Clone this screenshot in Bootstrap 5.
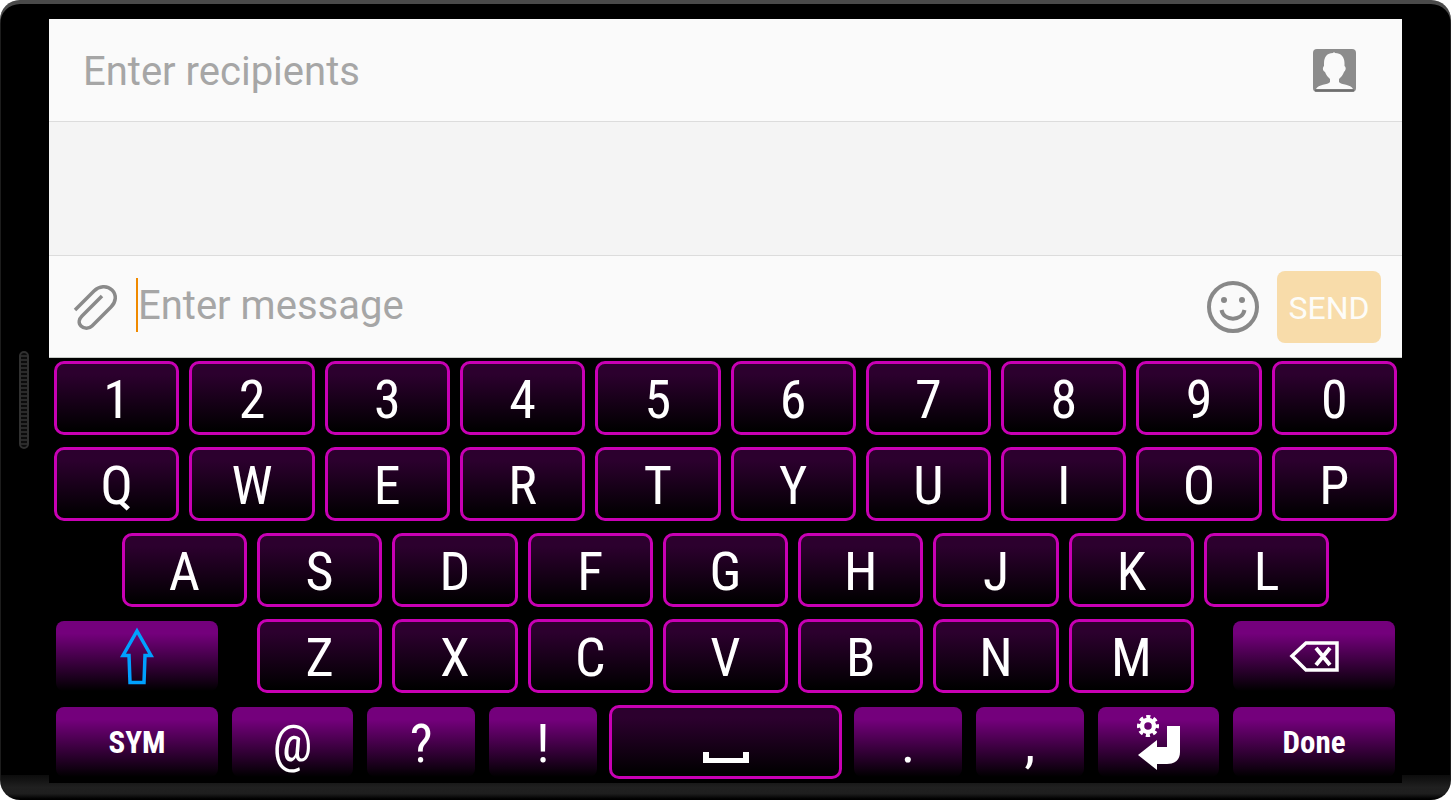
<!DOCTYPE html>
<html lang="en">
<head>
<meta charset="utf-8">
<meta name="viewport" content="width=device-width, initial-scale=1">
<title>New message</title>
<link rel="stylesheet" href="https://cdn.jsdelivr.net/npm/bootstrap@5.3.0/dist/css/bootstrap.min.css">
<style>
  body { font-family: Roboto, "Liberation Sans", sans-serif; background: #fff; }

  /* Phone body */
  .device {
    min-height: 100vh;
    border-radius: 20px;
    overflow: hidden;
    background:
      linear-gradient(#0c0c0c, #202020 50%, #1e1e1e 75%, #000 96%) bottom / 100% 25px no-repeat,
      #000;
    box-shadow: inset 0 4px 0 #4a4a4a, inset 1px 0 0 #1c1c1c, inset -1px 0 0 #1c1c1c;
  }
  .bezel { flex: 0 0 49px; }
  .speaker {
    width: 10px;
    height: 98px;
    margin-right: 1px;
    border: 2px solid #303030;
    border-radius: 5px;
    background: repeating-linear-gradient(#0c0c0c 0 2px, #2a2a2a 2px 4px);
  }
  .phone-screen { padding: 19px 0 17px; min-width: 0; }

  /* Message composer */
  .composer { background: #fafafa; border-bottom: 1px solid #c8ccc8; }
  .recipients { min-height: 103px; padding: 0 46px 0 34px; border-bottom: 1px solid #dcdcdc; }
  .thread { background: #f4f4f4; min-height: 60px; }
  .compose-row { min-height: 102px; padding: 0 21px 4px 23px; border-top: 1px solid #dcdcdc; }
  .field,
  .field:focus {
    min-width: 0;
    height: 54px;
    padding: 2px 0 0;
    border: 0;
    border-radius: 0;
    background: transparent;
    box-shadow: none;
    color: #444;
    font-size: 40px;
    line-height: 52px;
  }
  .field::placeholder { color: #a6a6a6; opacity: 1; }
  .field-active, .field-active:focus { border-left: 2px solid #f08a00; }
  .compose-row .icon-button { padding-top: 4px; }
  .icon-button { padding: 0; border: 0; line-height: 0; color: #8a8a8a; }
  .send-button,
  .send-button:disabled {
    width: 104px;
    height: 72px;
    margin-top: 4px;
    padding: 2px 0 0;
    border: 0;
    border-radius: 8px;
    background: #f8dcaa;
    color: #fdfcf8;
    font-size: 32px;
    opacity: 1;
  }

  /* Keyboard */
  .keyboard { background: #000; padding: 3px 0 4px; gap: 12px; }
  .cell { padding: 0 5px; flex: 0 0 10%; min-width: 0; }
  .cell-9 { flex-basis: 9%; }
  .cell-13 { flex-basis: 13%; }
  .cell-18 { flex-basis: 18%; }
  .gap-cell { flex: 0 0 2%; }
  .keycap,
  .keycap:hover,
  .keycap:active {
    height: 74px;
    padding: 4px 0 0;
    border: 3px solid #c800b4;
    border-radius: 10px;
    background: linear-gradient(#2c002e 15%, #000 98%) padding-box;
    color: #fff;
    font-family: "Roboto Condensed", Roboto, "Liberation Sans", sans-serif;
    font-size: 54px;
    line-height: 64px;
    overflow: hidden;
  }
  .keycap.fn,
  .keycap.fn:hover,
  .keycap.fn:active {
    border: 2px solid transparent;
    background: linear-gradient(#74007c 18%, #000 100%) padding-box;
  }
  .keycap.word { font-size: 31px; font-weight: 700; padding: 2px 0 0; }
  .keycap.at-sign { font-size: 52px; padding-top: 4px; }
  .keycap svg { display: block; margin: 0 auto; }
  .keycap.pictured { padding: 0; }
</style>
</head>
<body>
<div class="device d-flex">
  <div class="bezel d-flex align-items-center justify-content-center"><div class="speaker"></div></div>

  <main class="phone-screen flex-grow-1 d-flex flex-column">
    <form class="composer flex-grow-1 d-flex flex-column">
      <div class="recipients d-flex align-items-center">
        <input type="text" class="form-control field flex-grow-1" placeholder="Enter recipients" aria-label="Enter recipients">
        <button type="button" class="btn icon-button" aria-label="Contacts">
          <svg width="43" height="43" viewBox="0 0 43 43">
            <rect width="43" height="43" rx="4" fill="#8c8c8c"/>
            <path fill="#fafafa" d="M20 4L21 3L22 4C28 4 31.500 8 31.500 14V17C34 19 32 22 31 23C30 26 28 28 26 30V33C28 36 38 35 40 40H3C5 35 15 36 17 33V30C15 28 13 26 12 23C10 22 9 19 11 17V14C11 8 14 4 20 4Z"/>
            <path d="M2 41.500H41" stroke="#6e6e6e" stroke-width="2"/>
          </svg>
        </button>
      </div>

      <div class="thread flex-grow-1"></div>

      <div class="compose-row d-flex align-items-center">
        <button type="button" class="btn icon-button me-3" aria-label="Attach">
          <svg width="48" height="48" viewBox="0 0 48 48" fill="none" stroke="#8a8a8a" stroke-width="3.500">
            <path d="M3 27L22 8C27 3 35 2 40 7C45 12 44 19 39 24L20 43C17 46 12 46 9 43C6 40 7 36 10 33L30 13"/>
          </svg>
        </button>
        <input type="text" class="form-control field field-active flex-grow-1" placeholder="Enter message" aria-label="Enter message">
        <button type="button" class="btn icon-button me-3" aria-label="Emoji">
          <svg width="54" height="54" viewBox="0 0 54 54">
            <circle cx="26" cy="27" r="24" fill="none" stroke="#888" stroke-width="4"/>
            <circle cx="17" cy="20" r="3" fill="#888"/>
            <circle cx="35" cy="20" r="3" fill="#888"/>
            <path d="M14.500 30C17 41.500 35 41.500 37.500 30" fill="none" stroke="#888" stroke-width="4"/>
          </svg>
        </button>
        <button type="submit" class="btn send-button flex-shrink-0" disabled>SEND</button>
      </div>
    </form>

    <section class="keyboard d-flex flex-column" aria-label="Keyboard">
      <div class="d-flex justify-content-center">
        <div class="cell"><button type="button" class="btn keycap w-100">1</button></div>
        <div class="cell"><button type="button" class="btn keycap w-100">2</button></div>
        <div class="cell"><button type="button" class="btn keycap w-100">3</button></div>
        <div class="cell"><button type="button" class="btn keycap w-100">4</button></div>
        <div class="cell"><button type="button" class="btn keycap w-100">5</button></div>
        <div class="cell"><button type="button" class="btn keycap w-100">6</button></div>
        <div class="cell"><button type="button" class="btn keycap w-100">7</button></div>
        <div class="cell"><button type="button" class="btn keycap w-100">8</button></div>
        <div class="cell"><button type="button" class="btn keycap w-100">9</button></div>
        <div class="cell"><button type="button" class="btn keycap w-100">0</button></div>
      </div>
      <div class="d-flex justify-content-center">
        <div class="cell"><button type="button" class="btn keycap w-100">Q</button></div>
        <div class="cell"><button type="button" class="btn keycap w-100">W</button></div>
        <div class="cell"><button type="button" class="btn keycap w-100">E</button></div>
        <div class="cell"><button type="button" class="btn keycap w-100">R</button></div>
        <div class="cell"><button type="button" class="btn keycap w-100">T</button></div>
        <div class="cell"><button type="button" class="btn keycap w-100">Y</button></div>
        <div class="cell"><button type="button" class="btn keycap w-100">U</button></div>
        <div class="cell"><button type="button" class="btn keycap w-100">I</button></div>
        <div class="cell"><button type="button" class="btn keycap w-100">O</button></div>
        <div class="cell"><button type="button" class="btn keycap w-100">P</button></div>
      </div>
      <div class="d-flex justify-content-center">
        <div class="cell"><button type="button" class="btn keycap w-100">A</button></div>
        <div class="cell"><button type="button" class="btn keycap w-100">S</button></div>
        <div class="cell"><button type="button" class="btn keycap w-100">D</button></div>
        <div class="cell"><button type="button" class="btn keycap w-100">F</button></div>
        <div class="cell"><button type="button" class="btn keycap w-100">G</button></div>
        <div class="cell"><button type="button" class="btn keycap w-100">H</button></div>
        <div class="cell"><button type="button" class="btn keycap w-100">J</button></div>
        <div class="cell"><button type="button" class="btn keycap w-100">K</button></div>
        <div class="cell"><button type="button" class="btn keycap w-100">L</button></div>
      </div>
      <div class="d-flex justify-content-center">
        <div class="cell cell-13">
          <button type="button" class="btn keycap fn pictured w-100" aria-label="Shift">
            <svg width="34" height="58" viewBox="0 0 34 58" fill="none" stroke="#00a0ff" stroke-width="3.500">
              <path d="M17 4L31 28.500H25L24 55.500H10L9 28.500H3Z"/>
            </svg>
          </button>
        </div>
        <div class="gap-cell"></div>
        <div class="cell"><button type="button" class="btn keycap w-100">Z</button></div>
        <div class="cell"><button type="button" class="btn keycap w-100">X</button></div>
        <div class="cell"><button type="button" class="btn keycap w-100">C</button></div>
        <div class="cell"><button type="button" class="btn keycap w-100">V</button></div>
        <div class="cell"><button type="button" class="btn keycap w-100">B</button></div>
        <div class="cell"><button type="button" class="btn keycap w-100">N</button></div>
        <div class="cell"><button type="button" class="btn keycap w-100">M</button></div>
        <div class="gap-cell"></div>
        <div class="cell cell-13">
          <button type="button" class="btn keycap fn pictured w-100" aria-label="Backspace">
            <svg width="52" height="32" viewBox="0 0 52 32" fill="none" stroke="#fff" stroke-width="3.500">
              <path d="M4 16L18 3H49V30H18Z"/>
              <path d="M28 8L42 25M42 8L28 25" stroke-width="4"/>
            </svg>
          </button>
        </div>
      </div>
      <div class="d-flex justify-content-center">
        <div class="cell cell-13"><button type="button" class="btn keycap fn word w-100">SYM</button></div>
        <div class="cell"><button type="button" class="btn keycap fn at-sign w-100">@</button></div>
        <div class="cell cell-9"><button type="button" class="btn keycap fn w-100">?</button></div>
        <div class="cell cell-9"><button type="button" class="btn keycap fn w-100">!</button></div>
        <div class="cell cell-18">
          <button type="button" class="btn keycap pictured w-100" aria-label="Space">
            <svg width="46" height="44" viewBox="0 0 46 44" fill="#fff">
              <path d="M0 32H6V38H40V32H46V43H0Z"/>
            </svg>
          </button>
        </div>
        <div class="cell cell-9"><button type="button" class="btn keycap fn w-100">.</button></div>
        <div class="cell cell-9"><button type="button" class="btn keycap fn w-100">,</button></div>
        <div class="cell">
          <button type="button" class="btn keycap fn pictured w-100" aria-label="Enter and settings">
            <svg width="44" height="56" viewBox="0 0 44 56">
              <circle cx="12" cy="12" r="6" fill="none" stroke="#fff" stroke-width="4.500"/>
              <circle cx="12" cy="12" r="9" fill="none" stroke="#fff" stroke-width="4" stroke-dasharray="4 3.070" stroke-dashoffset="2"/>
              <path fill="#fff" d="M31 12H44V38C44 46 39 50 31 50H21V56L2 41L21 26V33H31Z"/>
            </svg>
          </button>
        </div>
        <div class="cell cell-13"><button type="button" class="btn keycap fn word w-100">Done</button></div>
      </div>
    </section>
  </main>

  <div class="bezel"></div>
</div>
<script src="https://cdn.jsdelivr.net/npm/bootstrap@5.3.0/dist/js/bootstrap.bundle.min.js"></script>
</body>
</html>
